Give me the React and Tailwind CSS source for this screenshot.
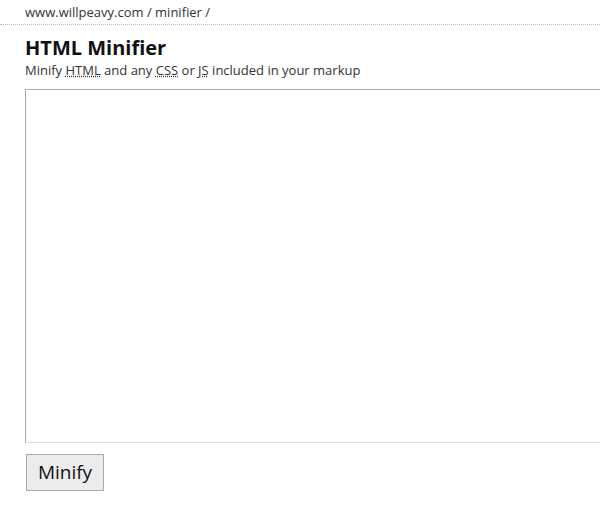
import React from "react";

const App = () => {
    return (
        <div className="w-[600px] h-[509px] overflow-hidden bg-white text-[#333]" style={{ fontFamily: "'Open Sans', 'Noto Sans', sans-serif" }}>
            {/* Breadcrumb */}
            <div className="border-b border-dotted border-[#bbb] pl-[25px] pt-[4px] pb-[3px] text-[13px] leading-[17px]">
                <span>www.willpeavy.com</span> / <span>minifier</span> /
            </div>

            <div className="pl-[25px]">
                <h1 className="mt-[10px] text-[20px] leading-[25px] font-bold text-[#111]">HTML Minifier</h1>
                <p className="mt-[2px] text-[13px] leading-[17px] text-[#333]">
                    Minify <abbr className="underline decoration-dotted">HTML</abbr> and any{" "}
                    <abbr className="underline decoration-dotted">CSS</abbr> or{" "}
                    <abbr className="underline decoration-dotted">JS</abbr> included in your markup
                </p>

                <textarea
                    className="block mt-[10px] w-[640px] h-[354px] border border-[#aaa] border-b-[#ddd] border-r-[#ddd] bg-white resize-none outline-none"
                />

                <button className="mt-[11px] ml-[1px] w-[78px] h-[37px] border border-[#aaa] bg-[#ececec] text-[19px] text-[#111]">
                    Minify
                </button>
            </div>
        </div>
    );
};

export default App;
